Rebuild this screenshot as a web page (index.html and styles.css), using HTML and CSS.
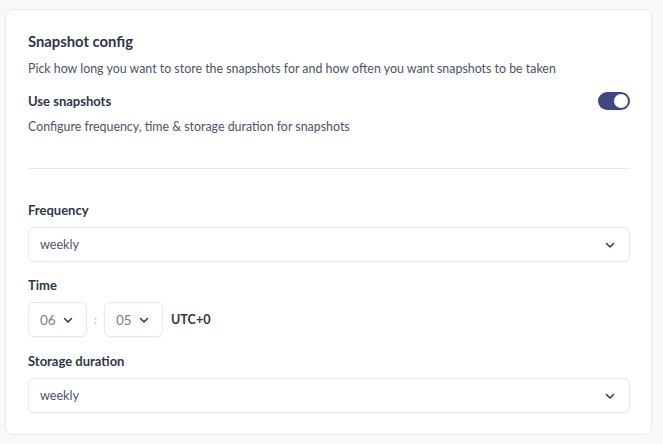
FILE: index.html
```html
<!DOCTYPE html>
<html>
<head>
<meta charset="utf-8">
<link rel="stylesheet" href="styles.css">
</head>
<body>
<div class="card">
  <h2 class="title">Snapshot config</h2>
  <p class="desc">Pick how long you want to store the snapshots for and how often you want snapshots to be taken</p>
  <div class="row">
    <span class="label">Use snapshots</span>
    <span class="toggle"><span class="knob"></span></span>
  </div>
  <p class="desc desc2">Configure frequency, time &amp; storage duration for snapshots</p>
  <div class="divider"></div>
  <div class="label field-label first">Frequency</div>
  <div class="select">
    <span>weekly</span>
    <svg class="chev" width="12" height="12" viewBox="0 0 12 12"><path d="M2.5 4.5 L6 8 L9.5 4.5" fill="none" stroke="#2d3748" stroke-width="1.5" stroke-linecap="round" stroke-linejoin="round"/></svg>
  </div>
  <div class="label field-label">Time</div>
  <div class="time-row">
    <div class="select small">
      <span>06</span>
      <svg class="chev" width="12" height="12" viewBox="0 0 12 12"><path d="M2.5 4.5 L6 8 L9.5 4.5" fill="none" stroke="#2d3748" stroke-width="1.5" stroke-linecap="round" stroke-linejoin="round"/></svg>
    </div>
    <span class="colon">:</span>
    <div class="select small">
      <span>05</span>
      <svg class="chev" width="12" height="12" viewBox="0 0 12 12"><path d="M2.5 4.5 L6 8 L9.5 4.5" fill="none" stroke="#2d3748" stroke-width="1.5" stroke-linecap="round" stroke-linejoin="round"/></svg>
    </div>
    <span class="utc">UTC+0</span>
  </div>
  <div class="label field-label storage">Storage duration</div>
  <div class="select">
    <span>weekly</span>
    <svg class="chev" width="12" height="12" viewBox="0 0 12 12"><path d="M2.5 4.5 L6 8 L9.5 4.5" fill="none" stroke="#2d3748" stroke-width="1.5" stroke-linecap="round" stroke-linejoin="round"/></svg>
  </div>
</div>
</body>
</html>
```
FILE: styles.css
```css
html, body {
  margin: 0;
  padding: 0;
}
body {
  background: #f8f8f9;
  font-family: "Lato", "Inter", sans-serif;
  color: #2d3748;
  padding: 9px 11px 9px 5px;
}
.card {
  background: #ffffff;
  border: 1px solid #e6e8eb;
  border-radius: 8px;
  padding: 21px 21px 21px 22px;
  display: flex;
  flex-direction: column;
}
.title {
  margin: 0;
  font-size: 14.8px;
  line-height: 20px;
  font-weight: 700;
  color: #2d3748;
}
.desc {
  margin: 9px 0 0;
  font-size: 12.4px;
  line-height: 18px;
  color: #4a5568;
}
.desc2 {
  margin-top: 8px;
}
.row {
  margin-top: 14px;
  display: flex;
  justify-content: space-between;
  align-items: center;
  height: 18px;
}
.label {
  font-size: 13px;
  line-height: 18px;
  font-weight: 700;
  color: #2d3748;
}
.toggle {
  width: 32px;
  height: 18px;
  border-radius: 9px;
  background: #3d4781;
  display: flex;
  align-items: center;
  justify-content: flex-end;
  padding: 0 2px;
  box-sizing: border-box;
}
.knob {
  width: 14px;
  height: 14px;
  border-radius: 50%;
  background: #ffffff;
}
.divider {
  margin-top: 32px;
  height: 1px;
  background: #e8eaed;
}
.field-label {
  margin-top: 14px;
}
.field-label.first {
  margin-top: 32px;
}
.field-label.storage {
  margin-top: 15px;
}
.select {
  margin-top: 8px;
  height: 35px;
  box-sizing: border-box;
  border: 1px solid #e6e8eb;
  border-radius: 6px;
  box-shadow: 0 1px 2px rgba(0, 0, 0, 0.04);
  display: flex;
  align-items: center;
  justify-content: space-between;
  padding: 0 13px 0 11px;
  font-size: 12.6px;
  color: #4a5568;
}
.time-row {
  margin-top: 8px;
  display: flex;
  align-items: center;
}
.time-row .select {
  margin-top: 0;
}
.select.small {
  width: 59px;
  padding: 0 12px 0 11px;
  font-size: 13.5px;
  color: #718096;
}
.colon {
  width: 17px;
  text-align: center;
  font-size: 12px;
  color: #a0aec0;
}
.utc {
  margin-left: 8px;
  font-size: 12.6px;
  font-weight: 700;
  color: #2d3748;
  margin-top: -1px;
}
```
